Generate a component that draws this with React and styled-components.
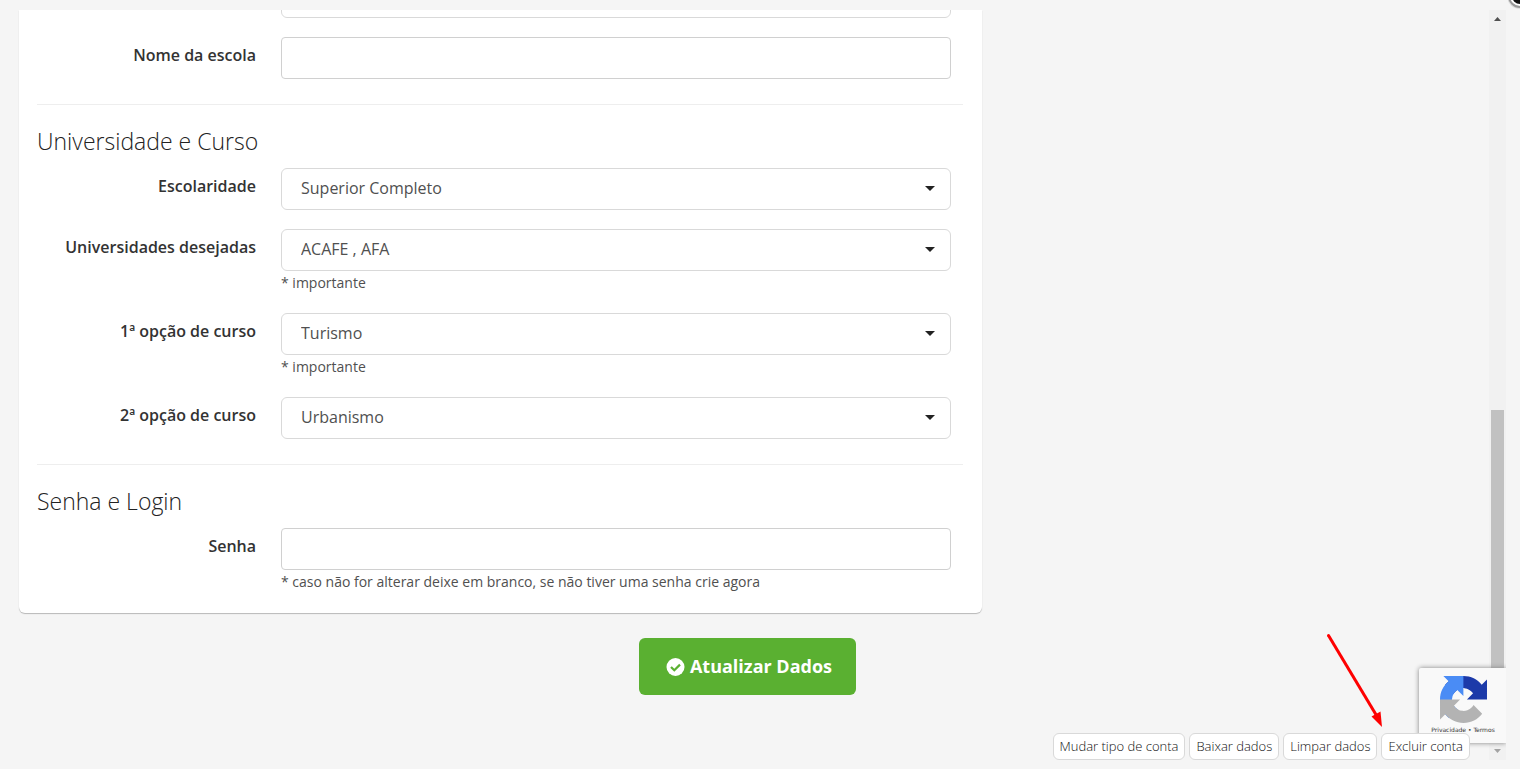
import React from "react";
import styled, { createGlobalStyle } from "styled-components";

const Global = createGlobalStyle`
  * { box-sizing: border-box; }
  body { margin: 0; background: #f5f5f5; color: #333; font: 300 16px/24px "Open Sans", sans-serif; }
  button, input, select { font: inherit; color: inherit; }
`;

const Page = styled.div`
  display: grid;
  grid-template-columns: minmax(0, 1fr) 17px;
  padding: 10px 14px 9px 0;
  min-height: 100vh;
  position: relative;
  overflow: hidden;
`;

const Content = styled.main`
  padding-left: 6px;
`;

const Form = styled.form`
  display: flex;
  flex-direction: column;
`;

const Columns = styled.div`
  display: grid;
  grid-template-columns: 1.95fr 1fr;
  padding: 0 13px;
`;

const Card = styled.div`
  background: #fff;
  border-radius: 0 0 6px 6px;
  box-shadow: 0 1px 1px rgba(0, 0, 0, 0.25);
  padding: 0 19px 20px 18px;
`;

const Fields = styled.section`
  display: flex;
  flex-direction: column;
  gap: 19px;
  padding-right: 12px;
`;

const Row = styled.div`
  display: grid;
  grid-template-columns: 219px minmax(0, 1fr);
  column-gap: 25px;
`;

const Label = styled.label`
  font-weight: 600;
  text-align: right;
  padding-top: 6px;
`;

const TextInput = styled.input`
  display: block;
  width: 100%;
  height: 42px;
  border: 1px solid #d0d0d0;
  border-radius: 4px;
  background: #fff;
  padding: 0 19px;
`;

const SelectWrap = styled.div`
  position: relative;
  svg { position: absolute; right: 15px; top: 18px; pointer-events: none; }
`;

const Select = styled.select`
  display: block;
  width: 100%;
  height: 42px;
  appearance: none;
  border: 1px solid #d9d9d9;
  border-radius: 6px;
  background: #fff;
  font-weight: 400;
  color: #505050;
  padding: 0 40px 2px 19px;
`;

const CutField = styled.div`
  grid-column: 2;
  height: 8px;
  overflow: hidden;
  display: flex;
  flex-direction: column;
  justify-content: flex-end;
`;

const Help = styled.small`
  display: block;
  font-size: 14px;
  line-height: 23px;
  font-weight: 400;
  color: #505050;
`;

const Rule = styled.hr`
  border: 0;
  border-top: 1px solid #eee;
  margin: 25px 0 0;
`;

const Heading = styled.h3`
  margin: 0;
  padding: 20px 0 11px;
  font-size: 23px;
  line-height: 32px;
  font-weight: 300;
  color: #222;
`;

const Submit = styled.button`
  align-self: center;
  display: flex;
  align-items: center;
  gap: 5px;
  margin-top: 25px;
  height: 57px;
  padding: 0 24px 2px 27px;
  border: 0;
  border-radius: 6px;
  background: #5ab031;
  color: #fff;
  font-size: 18px;
  font-weight: 700;
`;

const SubmitIcon = styled.svg`
  margin-top: 2px;
`;

const Actions = styled.nav`
  display: flex;
  justify-content: flex-end;
  gap: 4px;
  padding: 38px 19px 0 0;
`;

const Action = styled.button`
  position: relative;
  z-index: 2;
  height: 27px;
  padding: 0 6px 1px;
  border: 1px solid #d9d9d9;
  border-radius: 6px;
  background: #fff;
  color: #111;
  font-size: 13px;
  line-height: 23px;
`;

const Scrollbar = styled.div`
  display: grid;
  grid-template-rows: 17px 382fr 333fr 17px;
  justify-items: center;
  align-items: center;
  background: #f1f1f1;
`;

const Thumb = styled.div`
  grid-row: 3;
  align-self: stretch;
  width: 13px;
  background: #c1c1c1;
`;

const ScrollArrow = styled.svg`
  grid-row: ${(p) => p.$row};
`;

const Badge = styled.aside`
  position: absolute;
  right: 14px;
  bottom: 26px;
  width: 87px;
  height: 75px;
  padding: 8px 0 0 1px;
  background: #f9f9f9;
  border-radius: 2px 0 0 2px;
  box-shadow: 0 0 5px gray;
  clip-path: inset(-6px 0 -6px -6px);
  display: flex;
  flex-direction: column;
  align-items: center;
`;

const Legal = styled.div`
  font: 400 6px/14px "DejaVu Sans", sans-serif;
  color: #333;
  white-space: nowrap;
  a { color: inherit; text-decoration: none; }
`;

const Pointer = styled.svg`
  position: absolute;
  right: 134px;
  bottom: 40px;
  z-index: 3;
  pointer-events: none;
`;

const Corner = styled.svg`
  position: absolute;
  top: 0;
  right: 0;
`;

const Dropdown = ({ id, value }) => (
  <SelectWrap>
    <Select id={id} defaultValue={value}>
      <option>{value}</option>
    </Select>
    <svg width="11" height="5" viewBox="0 0 11 5"><path d="M0 0h10L5 5z" fill="#222" /></svg>
  </SelectWrap>
);

const Field = ({ id, label, value, type, help }) => (
  <Row>
    <Label htmlFor={id}>{label}</Label>
    <div>
      {value ? <Dropdown id={id} value={value} /> : <TextInput id={id} type={type} />}
      {help && <Help>{help}</Help>}
    </div>
  </Row>
);

const preferences = [
  { id: "escolaridade", label: "Escolaridade", value: "Superior Completo" },
  { id: "universidades", label: "Universidades desejadas", value: "ACAFE , AFA", help: "* importante" },
  { id: "curso1", label: "1ª opção de curso", value: "Turismo", help: "* importante" },
  { id: "curso2", label: "2ª opção de curso", value: "Urbanismo" },
];

const actions = ["Mudar tipo de conta", "Baixar dados", "Limpar dados", "Excluir conta"];

export default function App() {
  return (
    <Page>
      <Global />
      <Content>
        <Form onSubmit={(e) => e.preventDefault()}>
          <Columns>
            <Card>
              <Fields>
                <Row>
                  <CutField><Select aria-label="Escola" /></CutField>
                </Row>
                <Field id="escola" label="Nome da escola" type="text" />
              </Fields>
              <Rule />
              <Heading>Universidade e Curso</Heading>
              <Fields>
                {preferences.map((f) => <Field key={f.id} {...f} />)}
              </Fields>
              <Rule />
              <Heading>Senha e Login</Heading>
              <Fields>
                <Field
                  id="senha"
                  label="Senha"
                  type="password"
                  help="* caso não for alterar deixe em branco, se não tiver uma senha crie agora"
                />
              </Fields>
            </Card>
          </Columns>
          <Submit type="submit">
            <SubmitIcon width="19" height="19" viewBox="0 0 19 19">
              <circle cx="9.500" cy="10" r="9" fill="#fff" />
              <path d="M5 10l3.300 3.300L14 7.600" fill="none" stroke="#5ab031" strokeWidth="2.200" />
            </SubmitIcon>
            Atualizar Dados
          </Submit>
        </Form>
        <Actions>
          {actions.map((a) => <Action key={a} type="button">{a}</Action>)}
        </Actions>
      </Content>
      <Scrollbar>
        <ScrollArrow $row={1} width="7" height="4" viewBox="0 0 7 4"><path d="M0 4L3.500 0L7 4z" fill="#505050" /></ScrollArrow>
        <Thumb />
        <ScrollArrow $row={4} width="7" height="4" viewBox="0 0 7 4"><path d="M0 0h7L3.500 4z" fill="#a3a3a3" /></ScrollArrow>
      </Scrollbar>
      <Badge>
        <svg width="47" height="47" viewBox="0 0 64 64">
          <path fill="#1c3aa9" d="M64 31.955l-.033-1.370V4.687l-7.160 7.160C50.948 4.674 42.033.093 32.050.093c-10.400 0-19.622 4.960-25.458 12.640l11.736 11.860a15.550 15.550 0 0 1 4.754-5.334c2.050-1.600 4.952-2.906 8.968-2.906.485 0 .860.057 1.135.163 4.976.393 9.288 3.140 11.828 7.124l-8.307 8.307L64 31.953" />
          <path fill="#4a8cf5" d="M31.862.094l-1.370.033H4.594l7.160 7.160C4.580 13.147 0 22.060 0 32.046c0 10.400 4.960 19.622 12.640 25.458L24.500 45.768a15.550 15.550 0 0 1-5.334-4.754c-1.600-2.050-2.906-4.952-2.906-8.968 0-.485.057-.860.163-1.135.393-4.976 3.140-9.288 7.124-11.828l8.307 8.307L31.860.095" />
          <path fill="#b3b3b3" d="M.001 32.045l.033 1.370v25.898l7.160-7.160c5.860 7.173 14.774 11.754 24.760 11.754 10.400 0 19.622-4.960 25.458-12.640l-11.736-11.860a15.550 15.550 0 0 1-4.754 5.334c-2.050 1.600-4.952 2.906-8.968 2.906-.485 0-.860-.057-1.135-.163-4.976-.393-9.288-3.140-11.828-7.124l8.307-8.307c-10.522.040-22.400.066-27.295-.005" />
        </svg>
        <Legal><a href="#privacidade">Privacidade</a> • <a href="#termos">Termos</a></Legal>
      </Badge>
      <Pointer width="60" height="96" viewBox="0 0 60 96">
        <path d="M2.500 2.500L52 85" stroke="#fe0000" strokeWidth="3" strokeLinecap="round" />
        <path d="M56 94L45.500 83.500L54.500 78.500z" fill="#fe0000" />
      </Pointer>
      <Corner width="12" height="10" viewBox="0 0 12 10">
        <circle cx="12" cy="-4" r="13" fill="#ddd" />
        <circle cx="12" cy="-4" r="11" fill="#fff" stroke="#999" strokeWidth="2" />
        <circle cx="12" cy="-4" r="8" fill="#111" />
      </Corner>
    </Page>
  );
}
